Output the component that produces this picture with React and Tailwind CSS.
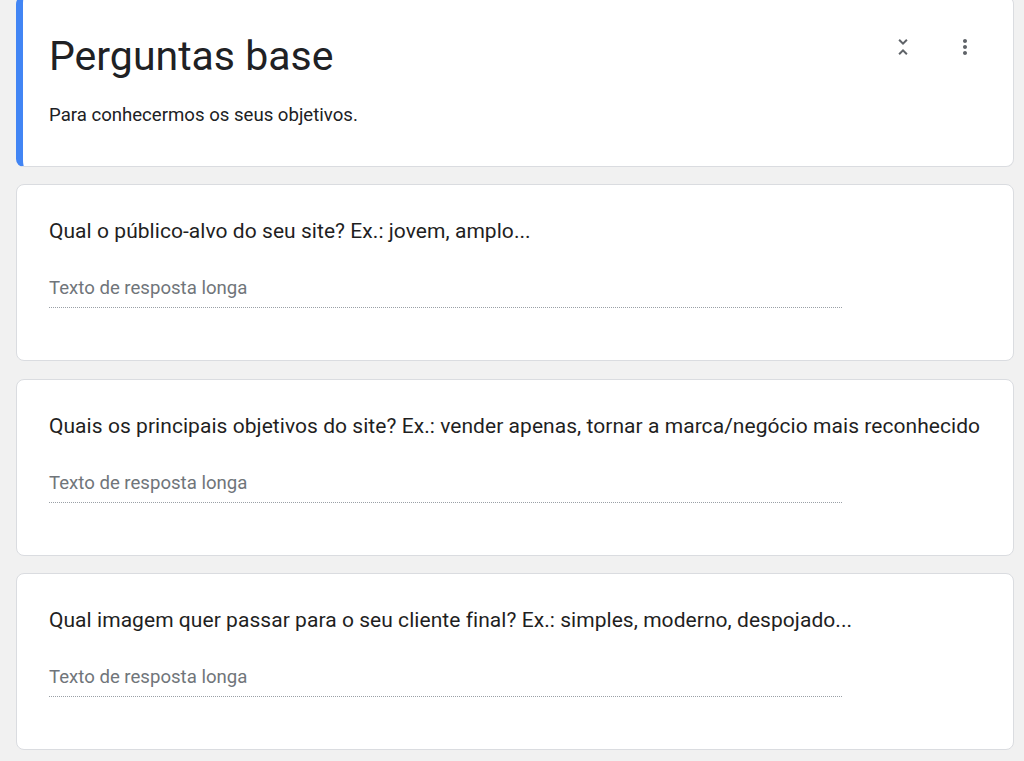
import React from "react";

const qs = [
  "Qual o público-alvo do seu site? Ex.: jovem, amplo...",
  "Quais os principais objetivos do site? Ex.: vender apenas, tornar a marca/negócio mais reconhecido",
  "Qual imagem quer passar para o seu cliente final? Ex.: simples, moderno, despojado...",
];

function UnfoldLess() {
  return (
    <svg width="24" height="24" viewBox="0 0 24 24" fill="#5f6368">
      <path d="M7.41 18.59L8.83 20 12 16.83 15.17 20l1.41-1.41L12 14l-4.59 4.59zm9.18-13.18L15.17 4 12 7.17 8.83 4 7.41 5.41 12 10l4.59-4.59z" />
    </svg>
  );
}

function MoreVert() {
  return (
    <svg width="24" height="24" viewBox="0 0 24 24" fill="#5f6368">
      <path d="M12 8c1.1 0 2-.9 2-2s-.9-2-2-2-2 .9-2 2 .9 2 2 2zm0 2c-1.1 0-2 .9-2 2s.9 2 2 2 2-.9 2-2-.9-2-2-2zm0 6c-1.1 0-2 .9-2 2s.9 2 2 2 2-.9 2-2-.9-2-2-2z" />
    </svg>
  );
}

export default function App() {
  return (
    <div className="min-h-[761px] w-[1024px] overflow-hidden bg-[#f1f1f1] pl-[16px] pr-[10px]">
      <div className="flex flex-col gap-[17.5px] mt-[-4px]">
        <div className="relative h-[170.5px] rounded-lg border border-[#dadce0] border-l-[7px] border-l-[#4285f4] bg-white pl-[26px] pr-[32px]">
          <div
            className="pt-[33px] text-[41px] leading-[52px] text-[#202124]"
            style={{ fontFamily: "Roboto, 'Noto Sans', sans-serif" }}
          >
            Perguntas base
          </div>
          <div
            className="mt-[21px] text-[18.6px] leading-[24px] text-[#202124]"
            style={{ fontFamily: "Roboto, sans-serif" }}
          >
            Para conhecermos os seus objetivos.
          </div>
          <div className="absolute right-[36px] top-[38px] flex items-center gap-[38px]">
            <UnfoldLess />
            <MoreVert />
          </div>
        </div>
        {qs.map((q) => (
          <div
            key={q}
            className="h-[177px] rounded-lg border border-[#dadce0] bg-white px-[32px] pt-[34px]"
          >
            <div
              className="text-[21px] leading-[24px] tracking-[0.05px] text-[#1f1f1f] whitespace-nowrap"
              style={{ fontFamily: "Roboto, 'Noto Sans', sans-serif" }}
            >
              {q}
            </div>
            <div
              className="mt-[33px] w-[793px] border-b border-dotted border-[#9aa0a6] pb-[7px] text-[18.6px] leading-[24px] text-[#70757a]"
              style={{ fontFamily: "Roboto, sans-serif" }}
            >
              Texto de resposta longa
            </div>
          </div>
        ))}
      </div>
    </div>
  );
}
